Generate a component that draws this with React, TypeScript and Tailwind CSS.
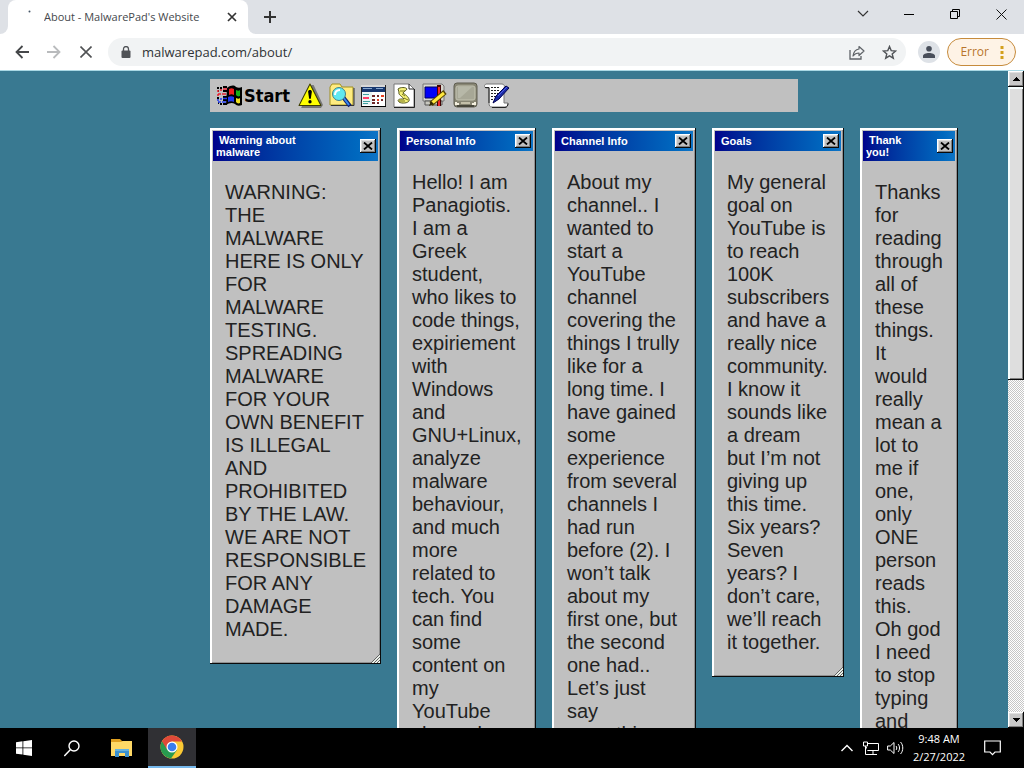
import type { ReactNode } from "react";

const uiFont = "font-['Open_Sans','Noto_Sans',sans-serif]";
const bevel =
  "shadow-[inset_-1px_-1px_#0a0a0a,inset_1px_1px_#fff,inset_-2px_-2px_#808080,inset_2px_2px_#dfdfdf]";

function WindowCard({
  title,
  width,
  grip,
  children,
}: {
  title: string;
  width: string;
  grip?: boolean;
  children: ReactNode;
}) {
  return (
    <section
      className={`relative shrink-0 bg-[#c0c0c0] p-[3px] shadow-[inset_-1px_-1px_#0a0a0a,inset_2px_2px_#fff,inset_-2px_-2px_#909090] ${width}`}
    >
      <header className="flex items-center justify-between bg-linear-to-r from-[#00008c] to-[#0f74c6] py-[3px] pr-[2px] pl-[3px]">
        <h2 className="max-w-3/5 indent-[3px] text-[11px] leading-3 font-bold text-white">{title}</h2>
        <button aria-label={`Close ${title}`} className={`flex h-[14px] w-4 items-center justify-center bg-[#c0c0c0] ${bevel}`}>
          <svg width="10" height="8" viewBox="0 0 10 8">
            <path d="m1 .5 8 7M9 .5l-8 7" stroke="#000" strokeWidth="1.800" />
          </svg>
        </button>
      </header>
      <p className="mx-3 my-5 text-[20px] leading-[23px] text-[#222]">{children}</p>
      {grip && (
        <svg className="absolute right-px bottom-px" width="9" height="9" viewBox="0 0 9 9">
          <path d="M9 0v9H0z" fill="#e8eee8" />
          <path d="M0 9 9 0M3 9l6-6M6 9l3-3" stroke="#555" strokeWidth="0.9" />
        </svg>
      )}
    </section>
  );
}

function WinFlag() {
  return (
    <svg width="27" height="25" viewBox="0 0 27 25">
      <path d="M11 5c4-3 7-3 9-1 2 1 4 1 6 0v18c-3 1-5 1-7-1-3-2-6-1-9 1z" fill="#000" />
      <path d="M13 6c2-1 3-1 5 0v6c-2-1-3-1-5 0z" fill="#f02020" />
      <path d="M20 7c2 1 3 1 4 0v6c-2 1-3 0-4-1z" fill="#18b018" />
      <path d="M12 14c2-1 4-1 6 0v5c-2-1-4-1-6 0z" fill="#2038f0" />
      <path d="M20 15c2 1 3 1 4 0v5c-2 1-3 0-4-1z" fill="#f0e020" />
      <path d="M1 5h2M4 5h2M7 4h4M2 8h1M7 8h4M1 15h2M7 14h4M2 20h1M4 21h2M7 21h4M7 17h4" stroke="#000" strokeWidth="2" />
      <path d="M1 8h2M4 7h2M7 6h4M2 11h3M6 11h4M1 12h2" stroke="#e82030" strokeWidth="1.6" />
      <path d="M1 17h2M4 16h2M7 15.5h4M2 19h3M6 19h4" stroke="#2038f0" strokeWidth="1.6" />
    </svg>
  );
}

function WarningIcon() {
  return (
    <svg width="25" height="25" viewBox="0 0 24 24">
      <path d="M13 2h2l9 19-2 3H3z" fill="#777" />
      <path d="M11.5 1 22 21.5H1z" fill="#ffff00" stroke="#3c3c00" strokeWidth="1" strokeLinejoin="round" />
      <path d="M9.700 8.500c0-2.500 3.600-2.500 3.600 0L12.300 15h-1.600z" fill="#000" />
      <circle cx="11.5" cy="18" r="1.600" fill="#000" />
    </svg>
  );
}

function FindFolderIcon() {
  return (
    <svg width="26" height="25" viewBox="0 0 26 25">
      <path d="M1 22V4l2-3h8l2 3h11v18z" fill="#ffec80" stroke="#a09020" />
      <path d="M2 22.5h23V5" fill="none" stroke="#333" />
      <path d="M14 14l7 9" stroke="#102070" strokeWidth="4" />
      <path d="M14 14l6 8" stroke="#3888f0" strokeWidth="2" />
      <circle cx="10" cy="11" r="6.5" fill="#60e8f0" stroke="#458089" />
      <path d="M6 12c0-3 2-5 5-5" fill="none" stroke="#fff" strokeWidth="2" />
    </svg>
  );
}

function CalendarIcon() {
  return (
    <svg width="26" height="25" viewBox="0 0 26 25" shapeRendering="crispEdges">
      <path d="M1 2h24v21H1z" fill="#fff" stroke="#222" />
      <path d="M1 2h24v2H1z" fill="#d8d8d8" />
      <path d="M2 4h23v5H2z" fill="#183870" />
      <path d="M3 5h9v1H3zM16 5h7v1h-7z" fill="#88a8d0" />
      <path d="M2 9h10v13H2z" fill="#eaf4f4" />
      <path d="M3 11h6M3 18h7M3 20h5" stroke="#40a0a0" />
      <path d="M3 15h6" stroke="#ff4068" strokeWidth="2" />
      <path d="M12 13h3m2 0h2m2 0h2M12 17h3m2 0h2m2 0h2M12 20h3m2 0h2" stroke="#702828" strokeWidth="2" />
      <path d="M21 12h3v2h-3zM17 16h2v2h-2z" fill="#e84020" />
      <path d="M1 23.5h25V3" fill="none" stroke="#000" />
    </svg>
  );
}

function ScriptIcon() {
  return (
    <svg width="22" height="25" viewBox="0 0 22 25">
      <path d="M1 1h15l5 5v18H1z" fill="#fff" stroke="#777" />
      <path d="M16 1v5h5M1 24.5h20.500V6" fill="none" stroke="#222" />
      <path d="M5 6c2-2 8-2 9 0-1 2-3 2-4 4 3 2 7 5 6 8-1 2-7 3-10 1-2-2 0-3 2-3h3c-2-3-6-4-5-7z" fill="#f4f078" stroke="#555820" />
      <path d="M7 8h5M9 11l3 2M11 15l4 2M6 18h6" stroke="#77751c" />
    </svg>
  );
}

function PaintIcon() {
  return (
    <svg width="25" height="25" viewBox="0 0 25 25">
      <path d="M1 1h19l2 2v15H1z" fill="#d8d8d0" stroke="#777" />
      <path d="M3 4h14v11H3z" fill="#0000f8" stroke="#000060" />
      <path d="M3 18h17v4H3z" fill="#c8c8c0" stroke="#555" />
      <path d="M17 2v21" stroke="#400" strokeWidth="4" />
      <path d="M17 4v19" stroke="#f02828" strokeWidth="2" />
      <path d="M23 9 9 21" stroke="#554400" strokeWidth="5" />
      <path d="M22 10 10 20" stroke="#ffe840" strokeWidth="3" />
      <path d="m7 23 2-5 3 3z" fill="#302800" />
    </svg>
  );
}

function MonitorIcon() {
  return (
    <svg width="25" height="26" viewBox="0 0 25 26">
      <rect x="1" y="1" width="23" height="24" rx="3" fill="#888674" stroke="#5f5d50" />
      <rect x="3" y="4" width="19" height="14" rx="2" fill="#a7a796" stroke="#c2c2b0" />
      <path d="M5 5h14L7 16H5z" fill="#b7b8a8" />
      <path d="M3 20v2h3M22 20v2h-3" fill="none" stroke="#f4f0e0" strokeWidth="2" />
      <path d="M8 21h9" stroke="#c4c0aa" strokeWidth="2" />
      <path d="M4 24h17" stroke="#47463b" strokeWidth="2" />
    </svg>
  );
}

function NotesIcon() {
  return (
    <svg width="26" height="25" viewBox="0 0 26 25">
      <path d="M2 1h16c2 0 3 2 2 4v15h4c0 2-1 4-3 4H8c-2 0-3-1-3-4V5H2C0 4 0 2 2 1z" fill="#fff" stroke="#777" />
      <path d="M1 4.500h4V20M8 24.500h13c2 0 3-2 3-4" fill="none" stroke="#222" />
      <path d="M7 4.500h9M7 7.500h9M7 10.500h7M7 13.500h5M7 16.500h3" stroke="#222" strokeDasharray="2 1" />
      <path d="m9 20 3-7L22 3l3 2-10 11z" fill="#1c2ca8" stroke="#000050" />
      <path d="m14 13 9-9" stroke="#5060e8" />
    </svg>
  );
}

const tools: [string, string, ReactNode][] = [
  ["Warning", "w-[31px]", <WarningIcon />],
  ["Find files", "w-[31px]", <FindFolderIcon />],
  ["Calendar", "w-[31px]", <CalendarIcon />],
  ["Scripts", "w-[31px]", <ScriptIcon />],
  ["Paint", "w-[31px]", <PaintIcon />],
  ["Display", "w-[31px]", <MonitorIcon />],
  ["Notes", "w-[31px]", <NotesIcon />],
];

function BrowserChrome() {
  return (
    <header className={`shrink-0 ${uiFont}`}>
      <div className="flex h-[34px] items-stretch bg-[#dee1e6]">
        <div className="flex items-end">
          <span className="h-2 w-2 bg-white">
            <span className="block h-2 w-2 rounded-br-lg bg-[#dee1e6]" />
          </span>
        </div>
        <div className="flex w-[240px] items-center rounded-t-lg bg-white pr-2 pl-5">
          <svg className="mr-[13px] mb-3 shrink-0" width="3" height="3" viewBox="0 0 3 3">
            <circle cx="1.500" cy="1.500" r="1" fill="#456" />
          </svg>
          <span className="grow truncate text-[11px] text-[#45484c]">About - MalwarePad's Website</span>
          <button aria-label="Close tab" className="flex h-4 w-4 items-center justify-center">
            <svg width="10" height="10" viewBox="0 0 10 10">
              <path d="m1 1 8 8M9 1 1 9" stroke="#333" strokeWidth="1.700" />
            </svg>
          </button>
        </div>
        <div className="flex items-end">
          <span className="h-2 w-2 bg-white">
            <span className="block h-2 w-2 rounded-bl-lg bg-[#dee1e6]" />
          </span>
        </div>
        <button aria-label="New tab" className="flex w-7 items-center justify-center">
          <svg width="12" height="12" viewBox="0 0 12 12">
            <path d="M6 0v12M0 6h12" stroke="#333" strokeWidth="2" />
          </svg>
        </button>
        <div className="ml-auto flex pb-[6px]">
          <button aria-label="Search tabs" className="flex w-[46px] items-center justify-center">
            <svg width="12" height="8" viewBox="0 0 12 8">
              <path d="m1 1 5 5 5-5" fill="none" stroke="#333" strokeWidth="1.200" />
            </svg>
          </button>
          <button aria-label="Minimize" className="flex w-[46px] items-center justify-center">
            <svg width="10" height="2" viewBox="0 0 10 2">
              <path d="M0 1h10" stroke="#000" shapeRendering="crispEdges" />
            </svg>
          </button>
          <button aria-label="Restore" className="flex w-[46px] items-center justify-center">
            <svg width="10" height="10" viewBox="0 0 10 10">
              <path d="M.5 2.500h7v7h-7zM2.500 2.500v-2h7v7h-2" fill="none" stroke="#000" />
            </svg>
          </button>
          <button aria-label="Close" className="flex w-[46px] items-center justify-center">
            <svg width="11" height="11" viewBox="0 0 11 11">
              <path d="m.5.500 10 10M10.500.500l-10 10" stroke="#111" />
            </svg>
          </button>
        </div>
      </div>
      <div className="flex h-9 items-center bg-white pr-2 pl-[6px]">
        <button aria-label="Back" className="flex h-8 w-8 items-center justify-center">
          <svg width="14" height="14" viewBox="0 0 14 14">
            <path d="M14 7H1.500M7.500 1l-6 6 6 6" fill="none" stroke="#454749" strokeWidth="1.800" />
          </svg>
        </button>
        <button aria-label="Forward" className="flex h-8 w-8 items-center justify-center">
          <svg width="14" height="14" viewBox="0 0 14 14">
            <path d="M0 7h12.500M6.500 1l6 6-6 6" fill="none" stroke="#b9bbbd" strokeWidth="1.800" />
          </svg>
        </button>
        <button aria-label="Stop loading" className="flex h-8 w-8 items-center justify-center">
          <svg width="12" height="12" viewBox="0 0 12 12">
            <path d="m.5.500 11 11M11.500.500l-11 11" stroke="#505254" strokeWidth="1.600" />
          </svg>
        </button>
        <form className="ml-[6px] flex h-7 grow items-center rounded-full bg-[#f1f3f4] pr-px pl-[13px]">
          <svg width="10" height="12" viewBox="0 0 10 12">
            <rect x="0.500" y="4.500" width="9" height="7.500" rx="1" fill="#505357" />
            <path d="M2.500 5V3a2.500 2.500 0 0 1 5 0v2" fill="none" stroke="#505357" strokeWidth="1.300" />
          </svg>
          <input
            aria-label="Address"
            className="ml-[11px] h-full min-w-0 grow bg-transparent text-[13px] text-[#303336] outline-none"
            defaultValue="malwarepad.com/about/"
          />
          <button type="button" aria-label="Share" className="flex w-8 justify-center">
            <svg width="16" height="15" viewBox="0 0 16 15">
              <path d="M1 5v9h11v-3" fill="none" stroke="#5f6368" strokeWidth="1.300" />
              <path d="M10 1.500 15 6l-5 4.500V8C7 8 5.500 9 4 11c.5-4 2.500-6.500 6-7z" fill="none" stroke="#5f6368" strokeWidth="1.200" strokeLinejoin="round" />
            </svg>
          </button>
          <button type="button" aria-label="Bookmark" className="flex w-8 justify-center">
            <svg width="15" height="15" viewBox="0 0 15 15">
              <path d="m7.500 1.500 1.700 4.100 4.400.4-3.400 2.900 1.100 4.300-3.800-2.300-3.800 2.300 1.100-4.300L1.400 6l4.400-.4z" fill="none" stroke="#505357" strokeWidth="1.400" />
            </svg>
          </button>
        </form>
        <button aria-label="Profile" className="ml-3 flex h-[22px] w-[22px] items-center justify-center rounded-full bg-[#dee2e7]">
          <svg width="14" height="14" viewBox="0 0 14 14">
            <circle cx="7" cy="3.800" r="2.800" fill="#484e5a" />
            <path d="M1 13v-2c0-4 12-4 12 0v2z" fill="#484e5a" />
          </svg>
        </button>
        <button className="ml-[7px] flex h-7 items-center gap-[11px] rounded-full border border-[#c68b3c] bg-[#fef3e6] pr-[11px] pl-[12px] text-[12px] text-[#b8752c]">
          Error
          <svg width="4" height="14" viewBox="0 0 4 14">
            <path d="M.5 1h3v3h-3zM.5 6h3v3h-3zM.5 11h3v3h-3z" fill="#d3a01c" />
          </svg>
        </button>
      </div>
    </header>
  );
}

function ScrollRail() {
  return (
    <div className="flex w-4 shrink-0 flex-col bg-[repeating-conic-gradient(#c6c6c6_0_25%,#fff_0_50%)] bg-size-[2px_2px]">
      <button aria-label="Scroll up" className={`flex h-4 items-center justify-center bg-[#c8c8c8] ${bevel}`}>
        <svg width="7" height="4" viewBox="0 0 7 4" shapeRendering="crispEdges">
          <path d="M3 0h1v1h1v1h1v1h1v1H0V3h1V2h1V1h1z" />
        </svg>
      </button>
      <div className="h-[293px] bg-[#dedede] shadow-[inset_-1px_-1px_#0a0a0a,inset_2px_2px_#f7ffff,inset_-2px_-2px_#808080]" />
      <button aria-label="Scroll down" className={`mt-auto flex h-4 items-center justify-center bg-[#c8c8c8] ${bevel}`}>
        <svg width="7" height="4" viewBox="0 0 7 4" shapeRendering="crispEdges">
          <path d="M0 0h7v1H6v1H5v1H4v1H3V3H2V2H1V1H0z" />
        </svg>
      </button>
    </div>
  );
}

function Taskbar() {
  return (
    <footer className={`flex h-10 shrink-0 items-stretch bg-black text-white ${uiFont}`}>
      <button aria-label="Start menu" className="flex w-12 items-center justify-center">
        <svg width="16" height="16" viewBox="0 0 16 16">
          <path d="M0 2.200 6.500 1.300v6.200H0zM7.300 1.200 16 0v7.500H7.300zM0 8.300h6.500v6.300L0 13.700zM7.300 8.300H16V16l-8.700-1.200z" fill="#fff" />
        </svg>
      </button>
      <button aria-label="Search" className="flex w-12 items-center justify-center">
        <svg width="16" height="17" viewBox="0 0 16 17">
          <circle cx="10" cy="6" r="5" fill="none" stroke="#fff" strokeWidth="1.400" />
          <path d="m6.300 9.800-6 6.200" stroke="#fff" strokeWidth="1.500" />
        </svg>
      </button>
      <button aria-label="File Explorer" className="flex w-[52px] items-center justify-center">
        <svg width="22" height="18" viewBox="0 0 22 18">
          <path d="M0 0h9l2 2h10v4H0z" fill="#e0a020" />
          <path d="M0 3h10l2-1h9v15H0z" fill="#ffd966" />
          <path d="M4 10h14v8h-4v-4H8v4H4z" fill="#3b91cf" />
          <path d="M4 10h14v2H4z" fill="#65b2df" />
        </svg>
      </button>
      <button aria-label="Chrome" className="flex w-12 items-center justify-center border-b-2 border-[#76b9ed] bg-[#303034]">
        <svg width="24" height="24" viewBox="0 0 24 24">
          <circle cx="12" cy="12" r="11.500" fill="#fbc934" />
          <path d="M12 12 2 6.300A11.500 11.500 0 0 0 11 23.450L17 15z" fill="#289a50" />
          <path d="M2 6.300a11.500 11.500 0 0 1 20 .2H12l-5 8z" fill="#df4939" />
          <circle cx="12" cy="12" r="5.500" fill="#fff" />
          <circle cx="12" cy="12" r="4.300" fill="#3b7ded" />
        </svg>
      </button>
      <div className="ml-auto flex items-center">
        <button aria-label="Show hidden icons" className="flex w-6 justify-center">
          <svg width="12" height="8" viewBox="0 0 12 8">
            <path d="m.5 7 5.500-5.500L11.500 7" fill="none" stroke="#fff" strokeWidth="1.400" />
          </svg>
        </button>
        <button aria-label="Network" className="flex w-6 justify-center">
          <svg width="16" height="14" viewBox="0 0 16 14">
            <path d="M5 2.500h10.500v7H3.500V6M10 10v3M6 13.500h8" fill="none" stroke="#fff" />
            <path d="M.5 1h4v4h-4zM2.500 5v8.500H6" fill="#000" stroke="#fff" />
          </svg>
        </button>
        <button aria-label="Volume" className="flex w-6 justify-center">
          <svg width="17" height="14" viewBox="0 0 17 14">
            <path d="M.6 5h2.700L7 1.500v11L3.300 9H.6z" fill="none" stroke="#fff" />
            <path d="M9 5c1 1 1 3 0 4M11 3c2 2 2 6 0 8M13.500 1c3 3 3 9 0 12" fill="none" stroke="#fff" />
          </svg>
        </button>
        <button className="w-16 text-center text-[11px] leading-[18px]">
          <span className="block">9:48 AM</span>
          <span className="block">2/27/2022</span>
        </button>
        <button aria-label="Notifications" className="mr-3 ml-px flex w-10 justify-center">
          <svg width="17" height="16" viewBox="0 0 17 16">
            <path d="M.7 1h15.600v11H11l-2.500 2.700L6 12H.7z" fill="none" stroke="#fff" strokeWidth="1.200" />
          </svg>
        </button>
      </div>
    </footer>
  );
}

export default function App() {
  return (
    <div className="flex h-screen flex-col overflow-hidden font-['Liberation_Sans',Arial,sans-serif]">
      <BrowserChrome />
      <div className="flex min-h-0 grow border-t border-[#a9d8e4] bg-[#397991]">
        <main className="min-w-0 grow overflow-hidden pt-2 pr-[50px] pl-[210px]">
          <nav className="flex h-[33px] max-w-[588px] items-center bg-[#c0c0c0] pl-[6px]">
            <button className="flex w-[79px] shrink-0 items-center gap-px font-['DejaVu_Sans_Condensed','DejaVu_Sans',sans-serif] text-[18px] leading-6 font-bold text-black">
              <WinFlag />
              Start
            </button>
            {tools.map(([name, width, icon]) => (
              <button key={name} aria-label={name} className={`flex shrink-0 justify-center pb-px ${width}`}>
                {icon}
              </button>
            ))}
          </nav>
          <div className="mt-4 flex items-start gap-4">
            <WindowCard title="Warning about malware" width="w-[171px]" grip>
              WARNING: THE MALWARE HERE IS ONLY FOR MALWARE TESTING. SPREADING MALWARE FOR YOUR OWN BENEFIT IS ILLEGAL AND
              PROHIBITED BY THE LAW. WE ARE NOT RESPONSIBLE FOR ANY DAMAGE MADE.
            </WindowCard>
            <WindowCard title="Personal Info" width="w-[139px]">
              Hello! I am Panagiotis. I am a Greek student, who likes to code things, expiriement with Windows and GNU+Linux,
              analyze malware behaviour, and much more related to tech. You can find some content on my YouTube channel.
            </WindowCard>
            <WindowCard title="Channel Info" width="w-[144px]">
              About my channel.. I wanted to start a YouTube channel covering the things I trully like for a long time. I have
              gained some experience from several channels I had run before (2). I won’t talk about my first one, but the second
              one had.. Let’s just say something bad
            </WindowCard>
            <WindowCard title="Goals" width="w-[132px]" grip>
              My general goal on YouTube is to reach 100K subscribers and have a really nice community. I know it sounds like a
              dream but I’m not giving up this time. Six years? Seven years? I don’t care, we’ll reach it together.
            </WindowCard>
            <WindowCard title="Thank you!" width="w-[98px]">
              Thanks for reading through all of these things. It would really mean a lot to me if one, only ONE person reads this.
              Oh god I need to stop typing and
            </WindowCard>
          </div>
        </main>
        <ScrollRail />
      </div>
      <Taskbar />
    </div>
  );
}
